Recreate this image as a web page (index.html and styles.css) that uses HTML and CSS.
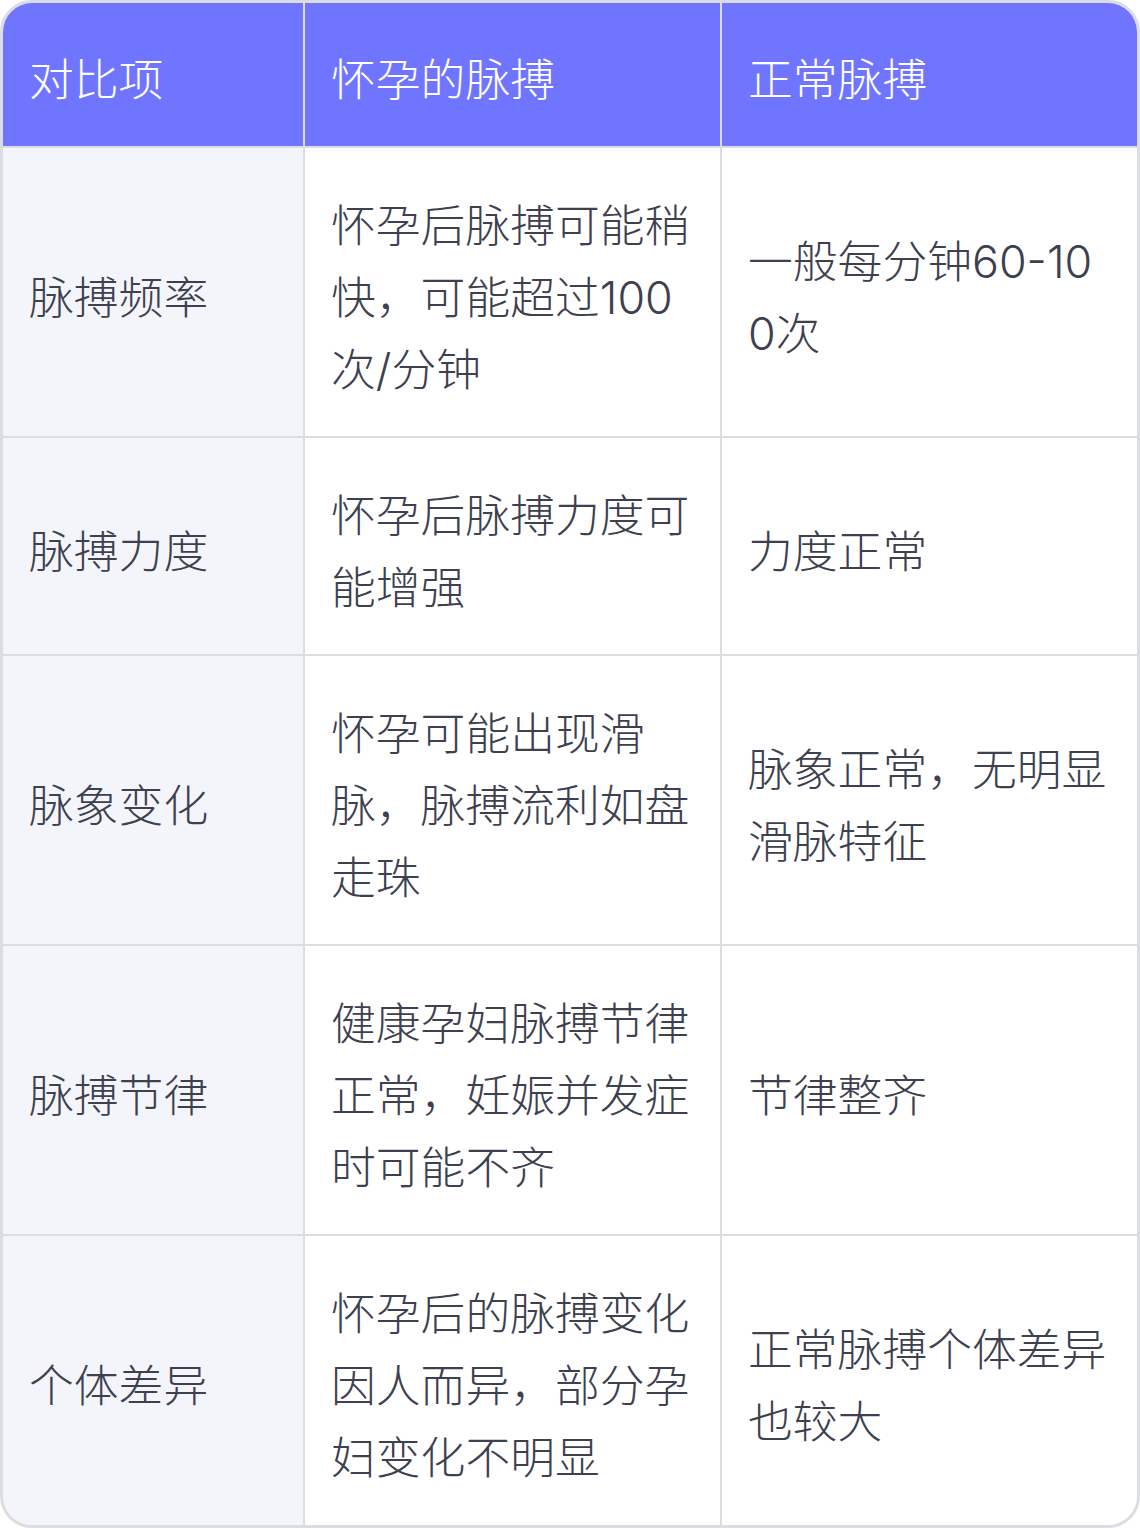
FILE: index.html
```html
<!DOCTYPE html>
<html lang="zh-CN">
<head>
<meta charset="utf-8">
<link rel="stylesheet" href="styles.css">
</head>
<body>
<div class="table-wrap">
  <div class="grid">
    <div class="cell head">对比项</div>
    <div class="cell head">怀孕的脉搏</div>
    <div class="cell head">正常脉搏</div>

    <div class="cell label">脉搏频率</div>
    <div class="cell">怀孕后脉搏可能稍快，可能超过100次/分钟</div>
    <div class="cell">一般每分钟60-100次</div>

    <div class="cell label">脉搏力度</div>
    <div class="cell">怀孕后脉搏力度可能增强</div>
    <div class="cell">力度正常</div>

    <div class="cell label">脉象变化</div>
    <div class="cell">怀孕可能出现滑脉，脉搏流利如盘走珠</div>
    <div class="cell">脉象正常，无明显滑脉特征</div>

    <div class="cell label">脉搏节律</div>
    <div class="cell">健康孕妇脉搏节律正常，妊娠并发症时可能不齐</div>
    <div class="cell">节律整齐</div>

    <div class="cell label last">个体差异</div>
    <div class="cell last">怀孕后的脉搏变化因人而异，部分孕妇变化不明显</div>
    <div class="cell last">正常脉搏个体差异也较大</div>
  </div>
</div>
</body>
</html>
```

FILE: styles.css
```css
html, body {
  margin: 0;
  padding: 0;
  background: #ffffff;
}

.table-wrap {
  width: 1140px;
  box-sizing: border-box;
  border: 3px solid #dcdde3;
  border-radius: 32px;
  overflow: hidden;
  background: #dcdde3;
}

.grid {
  display: grid;
  grid-template-columns: 300px 415px 415px;
  gap: 2px;
  background: #dcdde3;
}

.cell {
  display: flex;
  align-items: center;
  box-sizing: border-box;
  padding: 42px 26px 30px 26px;
  background: #ffffff;
  color: #3d404f;
  font-family: "Inter", "Noto Sans CJK SC", sans-serif;
  font-size: 44.8px;
  line-height: 72px;
  font-weight: 300;
  word-break: break-all;
}

.cell.label {
  background: #f4f5fa;
  padding-left: 26px;
}

.cell.head {
  background: #7075ff;
  color: #ffffff;
  padding-top: 41px;
  padding-bottom: 30px;
}

.cell.last {
  padding-bottom: 31px;
}
```
